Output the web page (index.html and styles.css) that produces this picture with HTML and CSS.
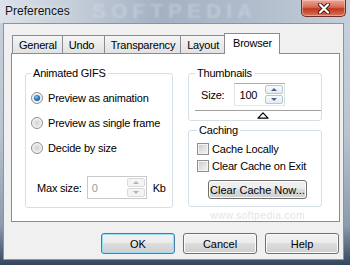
FILE: index.html
```html
<!DOCTYPE html>
<html lang="en">
<head>
  <meta charset="UTF-8" />
  <title>Preferences</title>
  <link rel="stylesheet" href="styles.css">
</head>
<body>

  <div class="window">
    <div class="titlebar">
      <span class="title">Preferences</span>
      <span class="title-mark">SOFTPEDIA</span>
      <button class="close" aria-label="Close">
        <svg width="14" height="11" viewBox="0 0 14 11">
          <path d="M3 1.5 L11 9.5 M11 1.5 L3 9.5" stroke="#3b1a16" stroke-width="4" stroke-linecap="round"/>
          <path d="M3 1.5 L11 9.5 M11 1.5 L3 9.5" stroke="#fff" stroke-width="2.2" stroke-linecap="round"/>
        </svg>
      </button>
    </div>

    <div class="client">
      <div class="tabs">
        <div class="tab">General</div>
        <div class="tab">Undo</div>
        <div class="tab">Transparency</div>
        <div class="tab">Layout</div>
        <div class="tab active">Browser</div>
      </div>

      <div class="panel">
        <fieldset class="group gifs">
          <legend>Animated GIFS</legend>
          <label class="option"><span class="radio checked"></span>Preview as animation</label>
          <label class="option"><span class="radio"></span>Preview as single frame</label>
          <label class="option"><span class="radio"></span>Decide by size</label>
          <div class="max-row">
            <span>Max size:</span>
            <div class="spin disabled">
              <span class="spin-value">0</span>
              <span class="spin-arrows"><span class="arrow up"></span><span class="arrow down"></span></span>
            </div>
            <span class="unit">Kb</span>
          </div>
        </fieldset>

        <div class="side">
          <fieldset class="group thumbs">
            <legend>Thumbnails</legend>
            <div class="size-row">
              <span>Size:</span>
              <div class="spin">
                <span class="spin-value">100</span>
                <span class="spin-arrows"><span class="arrow up"></span><span class="arrow down"></span></span>
              </div>
            </div>
            <div class="track"></div>
            <svg class="thumb" width="12" height="7" viewBox="0 0 12 7">
              <path d="M6 0.8 L11 6.2 L1 6.2 Z" fill="#fff" stroke="#000" stroke-width="1.2" stroke-linejoin="round"/>
            </svg>
          </fieldset>

          <fieldset class="group caching">
            <legend>Caching</legend>
            <label class="check-row"><span class="checkbox"></span>Cache Locally</label>
            <label class="check-row"><span class="checkbox"></span>Clear Cache on Exit</label>
            <button class="btn clear">Clear Cache Now...</button>
          </fieldset>
        </div>

        <span class="site-mark">www.softpedia.com</span>
      </div>

      <div class="buttons">
        <button class="btn default">OK</button>
        <button class="btn">Cancel</button>
        <button class="btn">Help</button>
      </div>
    </div>
  </div>

</body>
</html>
```

FILE: styles.css
```css
* {
  box-sizing: border-box;
}

body {
  margin: 0;
  width: 350px;
  height: 265px;
  overflow: hidden;
  font-family: "Liberation Sans", Arial, sans-serif;
  font-size: 11px;
  letter-spacing: -0.2px;
  color: #000;
}

.window {
  width: 350px;
  height: 265px;
  display: flex;
  flex-direction: column;
  padding: 0 6px 5px 3px;
  background: linear-gradient(to bottom, #c9d2dc 0, #b9c4d0 50%, #8c9bae 85%, #34465e 100%);
}

/* title bar */
.titlebar {
  position: relative;
  height: 23px;
  margin: 0 -6px 0 -3px;
  padding-left: 5px;
  display: flex;
  align-items: flex-start;
  background: linear-gradient(to right, #dbe2ea 0, #c3cdd8 22%, #a3b1c2 45%, #aebbca 70%, #c6cfd9 100%);
}

.title {
  margin-top: 4px;
  font-size: 12px;
  letter-spacing: 0;
  color: #151515;
  text-shadow: 0 0 6px rgba(255, 255, 255, 0.8);
}

.title-mark {
  position: absolute;
  left: 92px;
  top: 0;
  font-size: 21px;
  line-height: 22px;
  font-weight: bold;
  letter-spacing: 5px;
  color: rgba(225, 232, 241, 0.35);
  filter: blur(1.2px);
}

.close {
  margin-left: auto;
  margin-right: 4px;
  width: 45px;
  height: 17px;
  padding: 0;
  display: flex;
  align-items: center;
  justify-content: center;
  border: 1px solid #6e2d25;
  border-top: none;
  border-radius: 0 0 5px 5px;
  background: linear-gradient(to bottom, #e9a89b 0, #d86a55 45%, #c2361f 55%, #d67659 100%);
  box-shadow: inset 0 0 0 1px rgba(255, 210, 200, 0.5);
}

/* client area */
.client {
  flex: 1;
  background: #f0f0f0;
  border: 1px solid #8a95a2;
  padding: 9px 3px 5px 7px;
  display: flex;
  flex-direction: column;
}

.tabs {
  position: relative;
  z-index: 1;
  height: 21px;
  margin-bottom: -1px;
  padding-left: 1px;
  display: flex;
  align-items: flex-end;
}

.tab {
  height: 19px;
  min-width: 43px;
  margin-right: -1px;
  padding: 0 5px 0 6px;
  display: flex;
  align-items: center;
  border: 1px solid #898c95;
  background: linear-gradient(to bottom, #f5f5f5 0, #ebebeb 50%, #e2e2e2 100%);
}

.tab.active {
  height: 21px;
  padding: 0 7px 2px 8px;
  border-bottom: none;
  background: #fff;
}

.panel {
  position: relative;
  height: 169px;
  background: #fff;
  border: 1px solid #898c95;
  padding: 13px 0 0 13px;
  display: flex;
  align-items: flex-start;
  gap: 15px;
}

/* group boxes */
.group {
  margin: 0;
  min-width: 0;
  border: 1px solid #d5dfe5;
  border-radius: 3px;
}

.group legend {
  padding: 0 2px;
  line-height: 13px;
}

.gifs {
  width: 148px;
  padding: 5px 5px 8px;
}

.option {
  height: 25px;
  display: flex;
  align-items: center;
}

.radio {
  position: relative;
  width: 12px;
  height: 12px;
  margin-right: 5px;
  border: 1px solid #8e8f8f;
  border-radius: 50%;
  background: radial-gradient(circle at 50% 50%, #cfd0d2 0, #e6e6e6 45%, #f6f6f6 100%);
  box-shadow: inset 0 0 0 1px #f4f4f4;
}

.radio.checked::after {
  content: "";
  position: absolute;
  left: 2px;
  top: 2px;
  width: 6px;
  height: 6px;
  border-radius: 50%;
  background: radial-gradient(circle at 40% 35%, #8fd0f8 0, #2f7fc4 40%, #0f3f78 100%);
}

.max-row {
  margin-top: 16px;
  padding-left: 6px;
  display: flex;
  align-items: center;
}

.max-row .spin {
  width: 60px;
  margin-left: 5px;
}

.unit {
  margin-left: 6px;
}

/* spin boxes */
.spin {
  height: 23px;
  display: flex;
  align-items: stretch;
  border: 1px solid #abadb3;
  border-color: #abadb3 #dbdfe6 #e3e9ef #e2e3ea;
  background: #fff;
}

.spin-value {
  flex: 1;
  padding-left: 4px;
  display: flex;
  align-items: center;
}

.spin-arrows {
  width: 19px;
  padding: 1px 1px 1px 0;
  display: flex;
  flex-direction: column;
  gap: 1px;
}

.arrow {
  flex: 1;
  display: flex;
  align-items: center;
  justify-content: center;
  border: 1px solid #b5c6d8;
  border-radius: 2px;
  background: linear-gradient(to bottom, #fbfcfd, #e4ebf2);
}

.arrow::after {
  content: "";
  border-left: 3px solid transparent;
  border-right: 3px solid transparent;
}

.arrow.up::after {
  border-bottom: 3px solid #4b6386;
}

.arrow.down::after {
  border-top: 3px solid #4b6386;
}

.spin.disabled {
  border-color: #c9c9c9;
  color: #9b9b9b;
}

.spin.disabled .arrow {
  border-color: #dadada;
  background: #f4f4f4;
}

.spin.disabled .arrow.up::after {
  border-bottom-color: #b3b3b3;
}

.spin.disabled .arrow.down::after {
  border-top-color: #b3b3b3;
}

/* right column */
.side {
  width: 134px;
  display: flex;
  flex-direction: column;
  gap: 3px;
}

.thumbs {
  padding: 0 0 1px 6px;
}

.size-row {
  margin-top: 3px;
  padding-left: 6px;
  display: flex;
  align-items: center;
}

.size-row .spin {
  width: 51px;
  margin-left: 10px;
}

.track {
  margin-top: 4px;
  height: 2px;
  border-top: 1px solid #a0a0a0;
  border-bottom: 1px solid #fff;
}

.thumb {
  display: block;
  margin-left: 62px;
}

.caching {
  padding: 3px 6px 7px 8px;
}

.check-row {
  height: 17px;
  display: flex;
  align-items: center;
}

.checkbox {
  width: 12px;
  height: 12px;
  margin-right: 3px;
  border: 1px solid #8f8f8f;
  background: linear-gradient(135deg, #c4c7cc 0, #dfe1e4 50%, #f4f4f4 100%);
  box-shadow: inset 0 0 0 1px #f4f4f4;
}

/* buttons */
.btn {
  height: 21px;
  width: 74px;
  padding: 0;
  font: inherit;
  color: #000;
  border: 1px solid #707070;
  border-radius: 3px;
  background: linear-gradient(to bottom, #f2f2f2 0, #ebebeb 50%, #dddddd 50%, #cfcfcf 100%);
  box-shadow: inset 0 0 0 1px #fbfbfb;
}

.btn.default {
  border-color: #3c7fb1;
  box-shadow: inset 0 0 0 1px #9fdcf8;
}

.clear {
  width: 99px;
  height: 19px;
  margin: 6px 0 0 11px;
}

.buttons {
  margin-top: 11px;
  padding-right: 1px;
  display: flex;
  justify-content: flex-end;
  gap: 8px;
}

.site-mark {
  position: absolute;
  right: 34px;
  bottom: 0;
  font-size: 10px;
  letter-spacing: 0.5px;
  color: #e4e4e4;
}
```
